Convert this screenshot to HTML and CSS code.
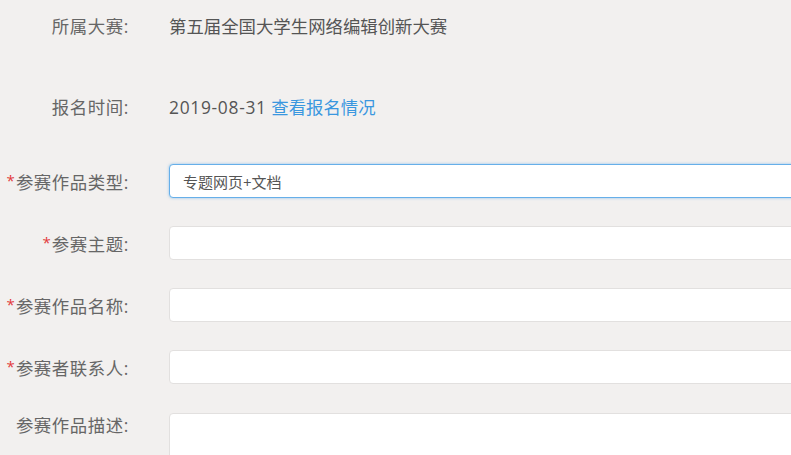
FILE: index.html
```html
<!DOCTYPE html>
<html><head><meta http-equiv="Content-Type" content="text/html; charset=UTF-8">
<title>参赛报名</title>
<link rel="stylesheet" href="styles.css">
</head>
<body>
<form class="form">
<div class="row info first">
<label class="lbl">所属大赛:</label>
<div class="val">第五届全国大学生网络编辑创新大赛</div>
</div>
<div class="row info second">
<label class="lbl">报名时间:</label>
<div class="val"><span class="date">2019-08-31</span> <a class="link" href="#">查看报名情况</a></div>
</div>
<div class="row">
<label class="lbl"><span class="req">*</span>参赛作品类型:</label>
<input class="inp focus" type="text" value="专题网页+文档">
</div>
<div class="row">
<label class="lbl"><span class="req">*</span>参赛主题:</label>
<input class="inp" type="text" value="">
</div>
<div class="row">
<label class="lbl"><span class="req">*</span>参赛作品名称:</label>
<input class="inp" type="text" value="">
</div>
<div class="row">
<label class="lbl"><span class="req">*</span>参赛者联系人:</label>
<input class="inp" type="text" value="">
</div>
<div class="row top">
<label class="lbl">参赛作品描述:</label>
<textarea class="inp area"></textarea>
</div>
</form>
</body>
</html>
```

FILE: styles.css
```css
html,body{height:100%;}
body{margin:0;overflow:hidden;background:#f2f0ef;font:17.4px "Open Sans","Noto Sans CJK SC",sans-serif;color:#666;}
.form{padding-top:8px;}
.row{display:grid;grid-template-columns:129px 700px;column-gap:40px;align-items:center;min-height:34px;margin-bottom:28px;}
.row.top{align-items:start;}
.first{margin-bottom:47px;}
.second{margin-bottom:41px;}
.lbl{text-align:right;white-space:nowrap;color:#666;letter-spacing:.6px;}
.val{color:#555;white-space:nowrap;}
.date{letter-spacing:.7px;}
.link{color:#3a97df;text-decoration:none;}
.req{color:#e3393c;font-size:15px;vertical-align:3px;margin-right:1px;letter-spacing:0;}
.inp{box-sizing:border-box;height:34px;width:700px;padding:0 13px;font:15px "Open Sans","Noto Sans CJK SC",sans-serif;color:#555;background:#fff;border:1px solid #e2e0df;border-radius:4px;outline:none;}
.focus{border-color:#66afe9;box-shadow:0 0 3px rgba(102,175,233,.7);}
.area{height:80px;resize:none;padding-top:6px;}
.lbl+.area{margin-top:1px;}
```
